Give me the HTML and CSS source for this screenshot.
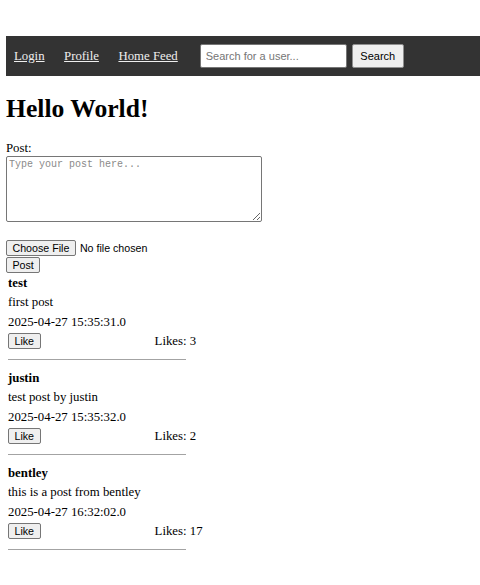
FILE: index.html
```html
<!DOCTYPE html>
<html lang="en">
<head>
<meta charset="utf-8">
<title>Hello World!</title>
<link rel="stylesheet" href="styles.css">
</head>
<body>
<nav class="nav">
  <a class="nav-link" href="#">Login</a>
  <a class="nav-link" href="#">Profile</a>
  <a class="nav-link" href="#">Home Feed</a>
  <form class="search">
    <input class="search-input" type="text" placeholder="Search for a user...">
    <button class="btn search-btn" type="button">Search</button>
  </form>
</nav>

<h1 class="title">Hello World!</h1>

<form class="post-form">
  <label class="post-label" for="post">Post:</label>
  <textarea class="post-text" id="post" placeholder="Type your post here..."></textarea>
  <div class="file-row">
    <button class="btn" type="button">Choose File</button>
    <span class="file-status">No file chosen</span>
  </div>
  <button class="btn post-btn" type="button">Post</button>
</form>

<div class="feed">
  <div class="post">
    <div class="post-user">test</div>
    <div class="post-body">first post</div>
    <div class="post-date">2025-04-27 15:35:31.0</div>
    <div class="post-actions">
      <button class="btn" type="button">Like</button>
      <span class="likes">Likes: 3</span>
    </div>
    <hr class="post-rule">
  </div>
  <div class="post">
    <div class="post-user">justin</div>
    <div class="post-body">test post by justin</div>
    <div class="post-date">2025-04-27 15:35:32.0</div>
    <div class="post-actions">
      <button class="btn" type="button">Like</button>
      <span class="likes">Likes: 2</span>
    </div>
    <hr class="post-rule">
  </div>
  <div class="post">
    <div class="post-user">bentley</div>
    <div class="post-body">this is a post from bentley</div>
    <div class="post-date">2025-04-27 16:32:02.0</div>
    <div class="post-actions">
      <button class="btn" type="button">Like</button>
      <span class="likes">Likes: 17</span>
    </div>
    <hr class="post-rule">
  </div>
</div>
</body>
</html>
```

FILE: styles.css
```css
html, body {
  background: #fff;
}

body {
  margin: 0;
  padding: 36px 0 0 6px;
  font-family: "Liberation Serif", "Times New Roman", serif;
  font-size: 12.8px;
  color: #000;
}

.nav {
  height: 40px;
  background: #333;
  display: flex;
  align-items: center;
  padding-left: 8px;
}

.nav-link {
  color: #eee;
  text-decoration: underline;
  margin-right: 19.5px;
  line-height: 15px;
}

.search {
  display: flex;
  align-items: center;
  gap: 5px;
  margin: 0 0 0 2.5px;
}

.search-input {
  box-sizing: border-box;
  width: 147px;
  height: 24px;
  margin: 0;
  padding: 0 5px;
  border: 1px solid #767676;
  border-radius: 2px;
  background: #fff;
  font-family: "Liberation Sans", Arial, sans-serif;
  font-size: 11px;
  color: #000;
}

.search-input::placeholder {
  color: #757575;
}

.btn {
  box-sizing: border-box;
  height: 16px;
  margin: 0;
  padding: 0 5.5px;
  border: 1px solid #767676;
  border-radius: 2px;
  background: #efefef;
  color: #000;
  font-family: "Liberation Sans", Arial, sans-serif;
  font-size: 10.67px;
  line-height: 14px;
}

.search-btn {
  width: 52px;
  height: 24px;
  font-size: 11px;
  border-color: #8f8f8f;
}

.title {
  margin: 18.4px 0 0;
  font-size: 25.6px;
  line-height: 30px;
  font-weight: bold;
}

.post-form {
  margin: 0;
}

.post-label {
  display: block;
  margin-top: 16.8px;
  line-height: 15px;
}

.post-text {
  display: block;
  box-sizing: border-box;
  width: 256px;
  height: 66px;
  margin: 0;
  padding: 2px;
  border: 1px solid #767676;
  border-radius: 2px;
  font-family: "Liberation Mono", "Courier New", monospace;
  font-size: 10px;
}

.post-text::placeholder {
  color: #8a8a8a;
}

.file-row {
  display: flex;
  align-items: center;
  gap: 4px;
  margin-top: 17.5px;
}

.file-status {
  font-family: "Liberation Sans", Arial, sans-serif;
  font-size: 10.67px;
}

.post-btn {
  display: block;
  margin-top: 1px;
}

.feed {
  margin-top: 2px;
}

.post {
  margin-left: 2px;
  width: 178px;
}

.post-user {
  font-weight: bold;
  line-height: 16px;
}

.post-body {
  line-height: 16px;
  margin-top: 3px;
  white-space: nowrap;
}

.post-date {
  line-height: 16px;
  margin-top: 4.5px;
  white-space: nowrap;
}

.post-actions {
  display: flex;
  align-items: center;
  margin-top: 2.8px;
}

.likes {
  margin-left: 114px;
  line-height: 16px;
  white-space: nowrap;
}

.post-rule {
  border: 0;
  border-top: 1px solid #a3a3a3;
  height: 0;
  margin: 10.5px 0 9.2px;
}
```
